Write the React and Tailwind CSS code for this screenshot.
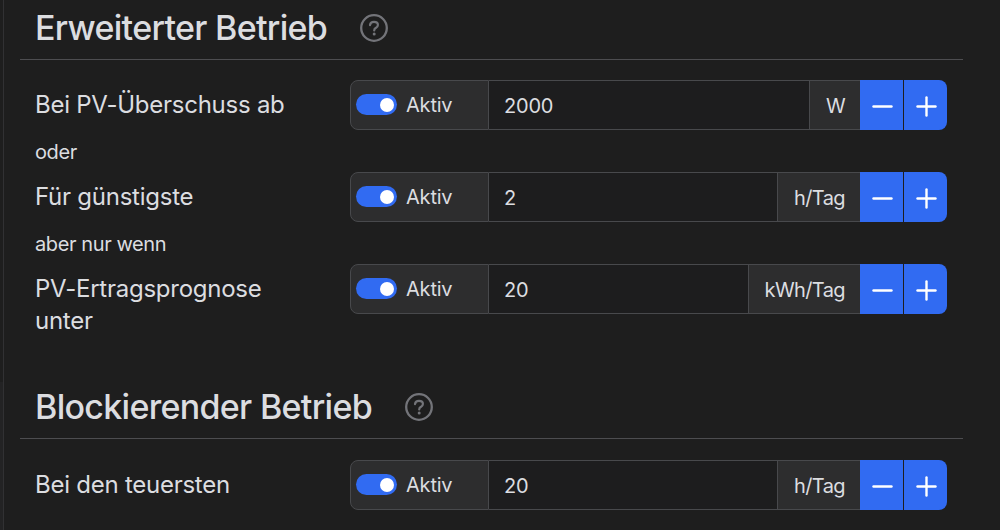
const rows = [
  { label: 'Bei PV-Überschuss ab', value: '2000', unit: 'W', hint: 'oder' },
  { label: 'Für günstigste', value: '2', unit: 'h/Tag', hint: 'aber nur wenn' },
  { label: 'PV-Ertragsprognose unter', value: '20', unit: 'kWh/Tag' },
]

function HelpIcon() {
  return (
    <svg className="h-7 w-7 text-[#737479]" viewBox="0 0 28 28" fill="none" stroke="currentColor">
      <circle cx="14" cy="14" r="12.8" strokeWidth="2.3" />
      <path
        d="M10 11.1c.3-2.1 1.9-3.2 4-3.2 2.3 0 3.9 1.2 3.9 3 0 1.3-.7 2.1-1.9 2.9-1.3.8-1.8 1.3-1.8 2.6"
        strokeWidth="2.2"
        strokeLinecap="round"
      />
      <circle cx="14.2" cy="20" r="1.5" fill="currentColor" stroke="none" />
    </svg>
  )
}

function SectionTitle({ children }) {
  return (
    <div className="flex h-[60px] items-center gap-[33px] border-b border-[#4d4d50] pb-[3px] pl-[15px]">
      <h2 className="text-[34px] leading-none font-medium tracking-[-0.7px] whitespace-nowrap">{children}</h2>
      <HelpIcon />
    </div>
  )
}

function Switch() {
  return (
    <span className="flex h-[21px] w-[41px] items-center justify-end rounded-full bg-[#316bf2] pr-[3px]">
      <span className="h-[14px] w-[14px] rounded-full bg-white" />
    </span>
  )
}

function StepButton({ plus }) {
  return (
    <button
      className={`flex h-full w-[43px] items-center justify-center bg-[#316bf2] pt-[3px] pl-px ${plus ? 'rounded-r-lg' : 'mr-px'}`}
    >
      <svg className="h-[21px] w-[21px]" viewBox="0 0 21 21" stroke="#fff" strokeWidth="2.4" strokeLinecap="round">
        <path d="M1.5 10.5h18" />
        {plus && <path d="M10.5 1.5v18" />}
      </svg>
    </button>
  )
}

function Row({ label, value, unit }) {
  return (
    <div className="flex items-start pl-[15px]">
      <div className="w-[315px] pt-[9px] pr-8 text-2xl leading-8 tracking-[-0.25px]">{label}</div>

      {/* Eingabegruppe */}
      <div className="flex h-[50px] w-[597px] text-xl">
        <div className="flex w-[139px] items-center gap-[9px] rounded-l-lg border border-[#48494c] bg-[#2d2d2e] pb-px pl-[5px] tracking-[-0.2px]">
          <Switch />
          <span>Aktiv</span>
        </div>
        <div className="flex flex-1 items-center border-y border-[#48494c] bg-[#1d1d1e] pt-px pl-[15px] tracking-[-0.2px]">
          {value}
        </div>
        <div className="flex items-center border-y border-l border-[#48494c] bg-[#2d2d2e] pt-[2px] pr-[15px] pl-4 tracking-[-0.6px]">
          {unit}
        </div>
        <StepButton />
        <StepButton plus />
      </div>
    </div>
  )
}

export default function App() {
  return (
    <div className="flex h-[530px] w-[1000px] overflow-hidden bg-[#1e1e1e] font-['Inter',sans-serif] text-[#dcdde0]">
      {/* Rand der Karte */}
      <div className="w-[4px] border-r border-[#313133] pt-[382px]">
        <div className="h-full bg-[#232324]" />
      </div>

      <main className="ml-4 w-[943px]">
        <SectionTitle>Erweiterter Betrieb</SectionTitle>
        <div className="flex h-[319px] flex-col pt-5">
          {rows.map((row) => (
            <div key={row.label}>
              <Row {...row} />
              {row.hint && (
                <p className="h-[42px] pt-[7px] pl-[15px] text-xl leading-[30px] tracking-[-0.4px]">{row.hint}</p>
              )}
            </div>
          ))}
        </div>

        <SectionTitle>Blockierender Betrieb</SectionTitle>
        <div className="pt-[21px]">
          <Row label="Bei den teuersten" value="20" unit="h/Tag" />
        </div>
      </main>
    </div>
  )
}
